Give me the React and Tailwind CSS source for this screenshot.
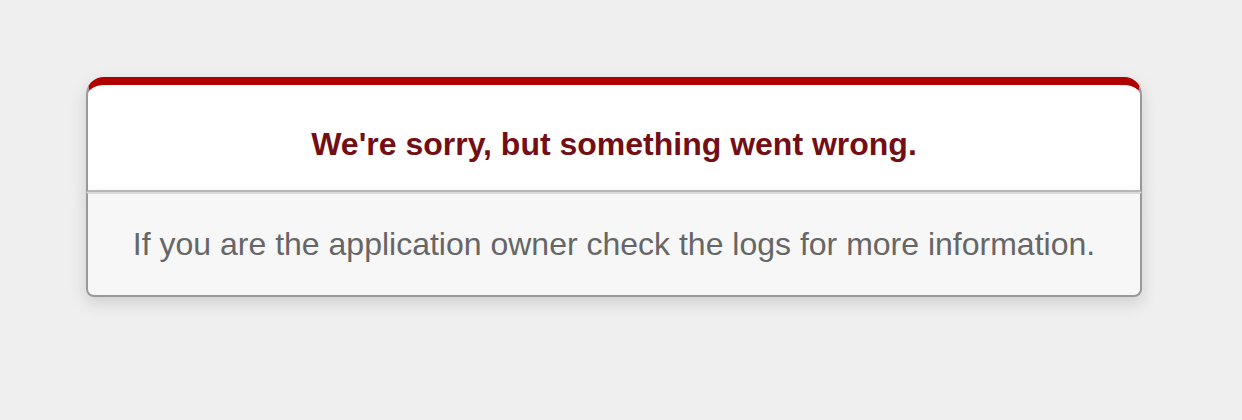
export default function App() {
    return (
        <div className="min-h-screen bg-[#EFEFEF] text-center text-[#2E2F30] font-['Liberation_Sans',Arial,sans-serif]">
            <div className="w-[1228px] pt-[77px]">
                {/* Error dialog */}
                <div className="mx-auto w-[1056px]">
                    <div className="rounded-t-[18px] border-2 border-t-8 border-[#CCC] border-t-[#B00100] border-x-[#999] border-b-[#BBB] bg-white px-[12%] pt-[14px] shadow-[0_6px_16px_rgba(50,50,50,0.17)]">
                        <h1 className="my-[21.44px] text-[32px] font-bold leading-[48px] text-[#730E15]">
                            We're sorry, but something went wrong.
                        </h1>
                    </div>
                    <p className="mb-8 rounded-b-lg border-2 border-[#CCC] border-t-[#DADADA] border-x-[#999] border-b-[#999] bg-[#F7F7F7] p-8 text-[32px] leading-[36.8px] text-[#666] shadow-[0_6px_16px_rgba(50,50,50,0.17)]">
                        If you are the application owner check the logs for more information.
                    </p>
                </div>
            </div>
        </div>
    )
}
